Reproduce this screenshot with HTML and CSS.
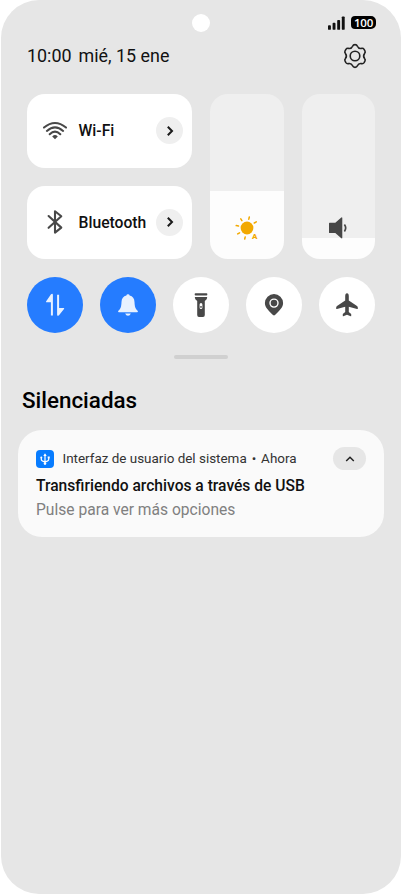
FILE: index.html
```html
<!DOCTYPE html>
<html lang="es">
<head>
    <meta charset="UTF-8">
    <meta name="viewport" content="width=device-width, initial-scale=1.0">
    <title>Panel de control</title>
    <link rel="stylesheet" href="styles.css">
</head>
<body>
    <div class="screen">
        <span class="camera"></span>

        <div class="status-bar">
            <svg class="signal" width="18" height="14" viewBox="0 0 18 14" fill="#111">
                <rect x="1" y="9.2" width="2.9" height="4.6" rx=".9"/>
                <rect x="5.6" y="6.8" width="2.9" height="7" rx=".9"/>
                <rect x="10.2" y="3.9" width="2.9" height="9.9" rx=".9"/>
                <rect x="14.8" y=".4" width="2.9" height="13.4" rx=".9"/>
            </svg>
            <span class="battery">100</span>
        </div>

        <header class="header">
            <div class="clock"><span class="time">10:00</span><span class="date">mié, 15 ene</span></div>
            <svg class="gear" width="24" height="26" viewBox="0 0 24 26" fill="none" stroke="#222" stroke-width="1.6" stroke-linejoin="round">
                <path d="M9.6 3.2Q10.2 1.6 12 1.6T14.4 3.2Q15.6 5.9 18.4 5.4Q20.2 5 21.1 6.4L21.9 7.8Q22.7 9.2 21.6 10.4Q19.6 13 21.6 15.6Q22.7 16.8 21.9 18.2L21.1 19.6Q20.2 21 18.4 20.6Q15.6 20.1 14.4 22.8Q13.8 24.4 12 24.4T9.6 22.8Q8.4 20.1 5.6 20.6Q3.8 21 2.9 19.6L2.1 18.2Q1.3 16.8 2.4 15.6Q4.4 13 2.4 10.4Q1.3 9.2 2.1 7.8L2.9 6.4Q3.8 5 5.6 5.4Q8.4 5.9 9.6 3.2Z"/>
                <circle cx="12" cy="13" r="4.8"/>
            </svg>
        </header>

        <section class="controls">
            <div class="networks">
                <div class="network">
                    <svg class="network-icon" width="26" height="20" viewBox="0 0 26 20" fill="none" stroke="#484848" stroke-width="2" stroke-linecap="round">
                        <path d="M2 6.6Q13-2.6 24 6.6M4.9 9.9Q13 2.8 21.1 9.9M7.7 13.2Q13 8 18.3 13.2"/>
                        <path d="M10.2 15.4Q13 12.6 15.8 15.4L13 18.2Z" fill="#484848" stroke="none"/>
                    </svg>
                    <span class="network-name">Wi-Fi</span>
                    <span class="more"><svg width="8" height="12" viewBox="0 0 8 12"><path d="M1.8 1.8L6 6L1.8 10.2" fill="none" stroke="#1a1a1a" stroke-width="2"/></svg></span>
                </div>
                <div class="network">
                    <svg class="network-icon" width="26" height="26" viewBox="0 0 26 26" fill="none" stroke="#484848" stroke-width="2.1" stroke-linecap="round" stroke-linejoin="round">
                        <path d="M6.6 7L19.3 18.6L13 23.6V2.2L19.3 7.2L6.6 18.8"/>
                    </svg>
                    <span class="network-name">Bluetooth</span>
                    <span class="more"><svg width="8" height="12" viewBox="0 0 8 12"><path d="M1.8 1.8L6 6L1.8 10.2" fill="none" stroke="#1a1a1a" stroke-width="2"/></svg></span>
                </div>
            </div>

            <div class="slider brightness">
                <svg width="26" height="26" viewBox="0 0 26 26">
                    <circle cx="13" cy="13" r="6.4" fill="#f2a900"/>
                    <path d="M14.8 4.2L15.3 2M7.9 5.6L6.8 3.9M4.5 11.1L2.2 10.6M5.6 17.8L3.7 18.9M11.2 21.9L10.7 24M20.3 8L22.3 6.8" stroke="#f2a900" stroke-width="1.5" stroke-linecap="round"/>
                </svg>
                <span class="auto">A</span>
            </div>
            <div class="slider volume">
                <svg width="26" height="26" viewBox="0 0 26 26">
                    <path d="M4.6 7.7H10.3L16 2.7Q17.3 1.7 17.3 3.2V22.6Q17.3 24.1 16 23.1L10.3 18.1H4.6Q4 18.1 4 17.4V8.4Q4 7.7 4.6 7.7Z" fill="#464646"/>
                    <path d="M19.4 9.6Q22 13 19.4 16.4" fill="none" stroke="#464646" stroke-width="1.7"/>
                </svg>
            </div>
        </section>

        <section class="toggles">
            <div class="toggle on">
                <svg width="28" height="28" viewBox="0 0 28 28" fill="#e8f1ff">
                    <path d="M10 3.2Q11.9 2 11.9 4V24.6H9.9V11.3H5.3Q4.6 11 5.2 10.2Z"/>
                    <path d="M16.1 3.8H18.1V17H22.8Q23.6 17.2 23 18L18 24.2Q16.1 25.6 16.1 23.6Z"/>
                </svg>
            </div>
            <div class="toggle on">
                <svg width="28" height="28" viewBox="0 0 28 28" fill="#e8f1ff">
                    <path d="M14 3.2Q15.5 3.2 15.6 4.6Q20.3 5.8 20.5 11Q20.6 16.2 22.2 18.2L23.8 20Q24.3 21.3 23 21.3H5Q3.7 21.3 4.2 20L5.8 18.2Q7.4 16.2 7.5 11Q7.7 5.8 12.4 4.6Q12.5 3.2 14 3.2Z"/>
                    <path d="M11.2 22.6H16.8Q16 24.8 14 24.8T11.2 22.6Z"/>
                </svg>
            </div>
            <div class="toggle">
                <svg width="28" height="28" viewBox="0 0 28 28" fill="#484848">
                    <rect x="7.7" y="2.3" width="12.6" height="2.2" rx=".8"/>
                    <path fill-rule="evenodd" d="M7.9 6.1H20.1V7Q20 8.3 17.8 10V24Q17.8 26 16 26H12Q10.2 26 10.2 24V10Q8 8.3 7.9 7ZM14 11.9Q12.6 11.9 12.6 13.4V16.4Q12.6 18 14 18T15.4 16.4V13.4Q15.4 11.9 14 11.9Z"/>
                    <circle cx="14" cy="15.9" r=".9"/>
                </svg>
            </div>
            <div class="toggle">
                <svg width="28" height="28" viewBox="0 0 28 28">
                    <path d="M14 3A9.1 9.1 0 0 1 23.1 12.1C23.1 16.6 19.2 19.9 15 24.1Q14 25 13 24.1C8.8 19.9 4.9 16.6 4.9 12.1A9.1 9.1 0 0 1 14 3Z" fill="#484848"/>
                    <circle cx="14" cy="12.1" r="4" fill="none" stroke="#fff" stroke-width="1.4"/>
                </svg>
            </div>
            <div class="toggle">
                <svg width="28" height="28" viewBox="0 0 28 28" fill="#484848">
                    <path d="M14 2.2Q15.8 2.2 15.8 5.2V9.6L24 15Q24.8 15.6 24.8 16.5V17.7Q24.8 18.3 24 18L15.8 15.8V20.9L18.2 23V24.9Q18.2 25.3 17.7 25.2L14 23.7L10.3 25.2Q9.8 25.3 9.8 24.9V23L12.2 20.9V15.8L4 18Q3.2 18.3 3.2 17.7V16.5Q3.2 15.6 4 15L12.2 9.6V5.2Q12.2 2.2 14 2.2Z"/>
                </svg>
            </div>
        </section>

        <div class="handle"></div>

        <h2 class="section-title">Silenciadas</h2>

        <article class="notification">
            <div class="notification-head">
                <span class="app-icon">
                    <svg width="18" height="18" viewBox="0 0 18 18" fill="none" stroke="#fff" stroke-width="1.2">
                        <path d="M9 4.6V14M5.3 7.4V9.4Q5.3 10.9 9 11.8Q12.7 10.9 12.7 9.4V7.4"/>
                        <path d="M7.3 6L9 3.2L10.7 6Z" fill="#fff" stroke="none"/>
                        <circle cx="9" cy="13.6" r="1.3" fill="#fff" stroke="none"/>
                        <circle cx="5.3" cy="7.4" r="1" fill="#fff" stroke="none"/>
                        <path d="M11.7 6.5H13.7V8.4H11.7Z" fill="#fff" stroke="none"/>
                    </svg>
                </span>
                <span class="app-name">Interfaz de usuario del sistema <span class="dot">•</span> Ahora</span>
                <span class="collapse"><svg width="10" height="6" viewBox="0 0 10 6"><path d="M1.2 5L5 1.3L8.8 5" fill="none" stroke="#222" stroke-width="1.5"/></svg></span>
            </div>
            <p class="notification-title">Transfiriendo archivos a través de USB</p>
            <p class="notification-text">Pulse para ver más opciones</p>
        </article>
    </div>
</body>
</html>
```

FILE: styles.css
```css
* {
    box-sizing: border-box;
}
body {
    margin: 0;
    background: #fff;
    font-family: Roboto, sans-serif;
    color: #111;
}
svg {
    display: block;
    flex-shrink: 0;
}
.screen {
    position: relative;
    width: 400px;
    height: 894px;
    margin: 0 1px;
    padding-top: 15px;
    border-radius: 38px;
    background: #e6e6e6;
}
.camera {
    position: absolute;
    top: 14px;
    left: 191px;
    width: 18px;
    height: 18px;
    border-radius: 50%;
    background: #fff;
}
.status-bar {
    display: flex;
    justify-content: flex-end;
    align-items: center;
    gap: 6px;
    height: 15px;
    padding-right: 25px;
}
.battery {
    width: 25px;
    height: 13px;
    border-radius: 4px 5px 5px 4px;
    background: #000;
    color: #fff;
    font-family: "Open Sans", sans-serif;
    font-size: 11.5px;
    font-weight: 600;
    line-height: 13px;
    letter-spacing: -.3px;
    text-align: center;
}
.header {
    display: flex;
    justify-content: space-between;
    align-items: center;
    height: 26px;
    margin-top: 13px;
    padding: 0 34px 0 26px;
}
.clock {
    display: flex;
    gap: 7px;
    font-size: 17.9px;
    line-height: 26px;
}
.controls {
    display: flex;
    gap: 18px;
    margin-top: 25px;
    padding: 0 26px;
}
.networks {
    display: flex;
    flex-direction: column;
    gap: 18px;
    width: 165px;
}
.network {
    display: flex;
    align-items: center;
    height: 73.5px;
    padding: 0 9px 0 15px;
    border-radius: 18px;
    background: #fff;
}
.network-name {
    flex: 1;
    margin-left: 10.5px;
    font-size: 15.7px;
    font-weight: 500;
}
.more {
    display: flex;
    align-items: center;
    justify-content: center;
    width: 27px;
    height: 27px;
    border-radius: 50%;
    background: #efefef;
}
.slider {
    position: relative;
    display: flex;
    justify-content: center;
    align-items: flex-end;
    width: 73.5px;
    height: 165px;
    padding-bottom: 18px;
    border-radius: 18px;
}
.brightness {
    background: linear-gradient(#efefef 97px, #fdfdfd 97px);
}
.volume {
    background: linear-gradient(#efefef 144px, #fdfdfd 144px);
}
.auto {
    position: absolute;
    left: 42px;
    bottom: 18px;
    color: #f2a900;
    font-size: 8px;
    font-weight: 900;
    line-height: 9px;
}
.toggles {
    display: flex;
    justify-content: space-between;
    margin-top: 18px;
    padding: 0 26px;
}
.toggle {
    display: flex;
    align-items: center;
    justify-content: center;
    width: 56px;
    height: 56px;
    border-radius: 50%;
    background: #fff;
}
.toggle.on {
    background: #257cff;
}
.handle {
    width: 54px;
    height: 4px;
    margin: 22px auto 0;
    border-radius: 2px;
    background: #d0d0d0;
}
.section-title {
    margin: 27px 0 0 21px;
    font-size: 22.4px;
    font-weight: 500;
    line-height: 28px;
    color: #000;
}
.notification {
    width: 366px;
    height: 107px;
    margin: 16px 0 0 17px;
    padding: 17px 18px 0;
    border-radius: 24px;
    background: #fafafa;
}
.notification-head {
    display: flex;
    align-items: center;
    height: 23px;
}
.app-icon {
    width: 18px;
    height: 18px;
    border-radius: 4px;
    background: #087cff;
}
.app-name {
    flex: 1;
    margin-left: 8.5px;
    font-size: 13.45px;
    color: #333;
    white-space: nowrap;
}
.dot {
    margin: 0 1.6px;
}
.collapse {
    display: flex;
    align-items: center;
    justify-content: center;
    width: 33px;
    height: 23px;
    border-radius: 12px;
    background: #e6e6e6;
}
.notification-title {
    margin: 4px 0 0;
    font-size: 15.6px;
    font-weight: 500;
    line-height: 24px;
    white-space: nowrap;
}
.notification-text {
    margin: 0;
    font-size: 15.6px;
    line-height: 24px;
    color: #808080;
}
```
